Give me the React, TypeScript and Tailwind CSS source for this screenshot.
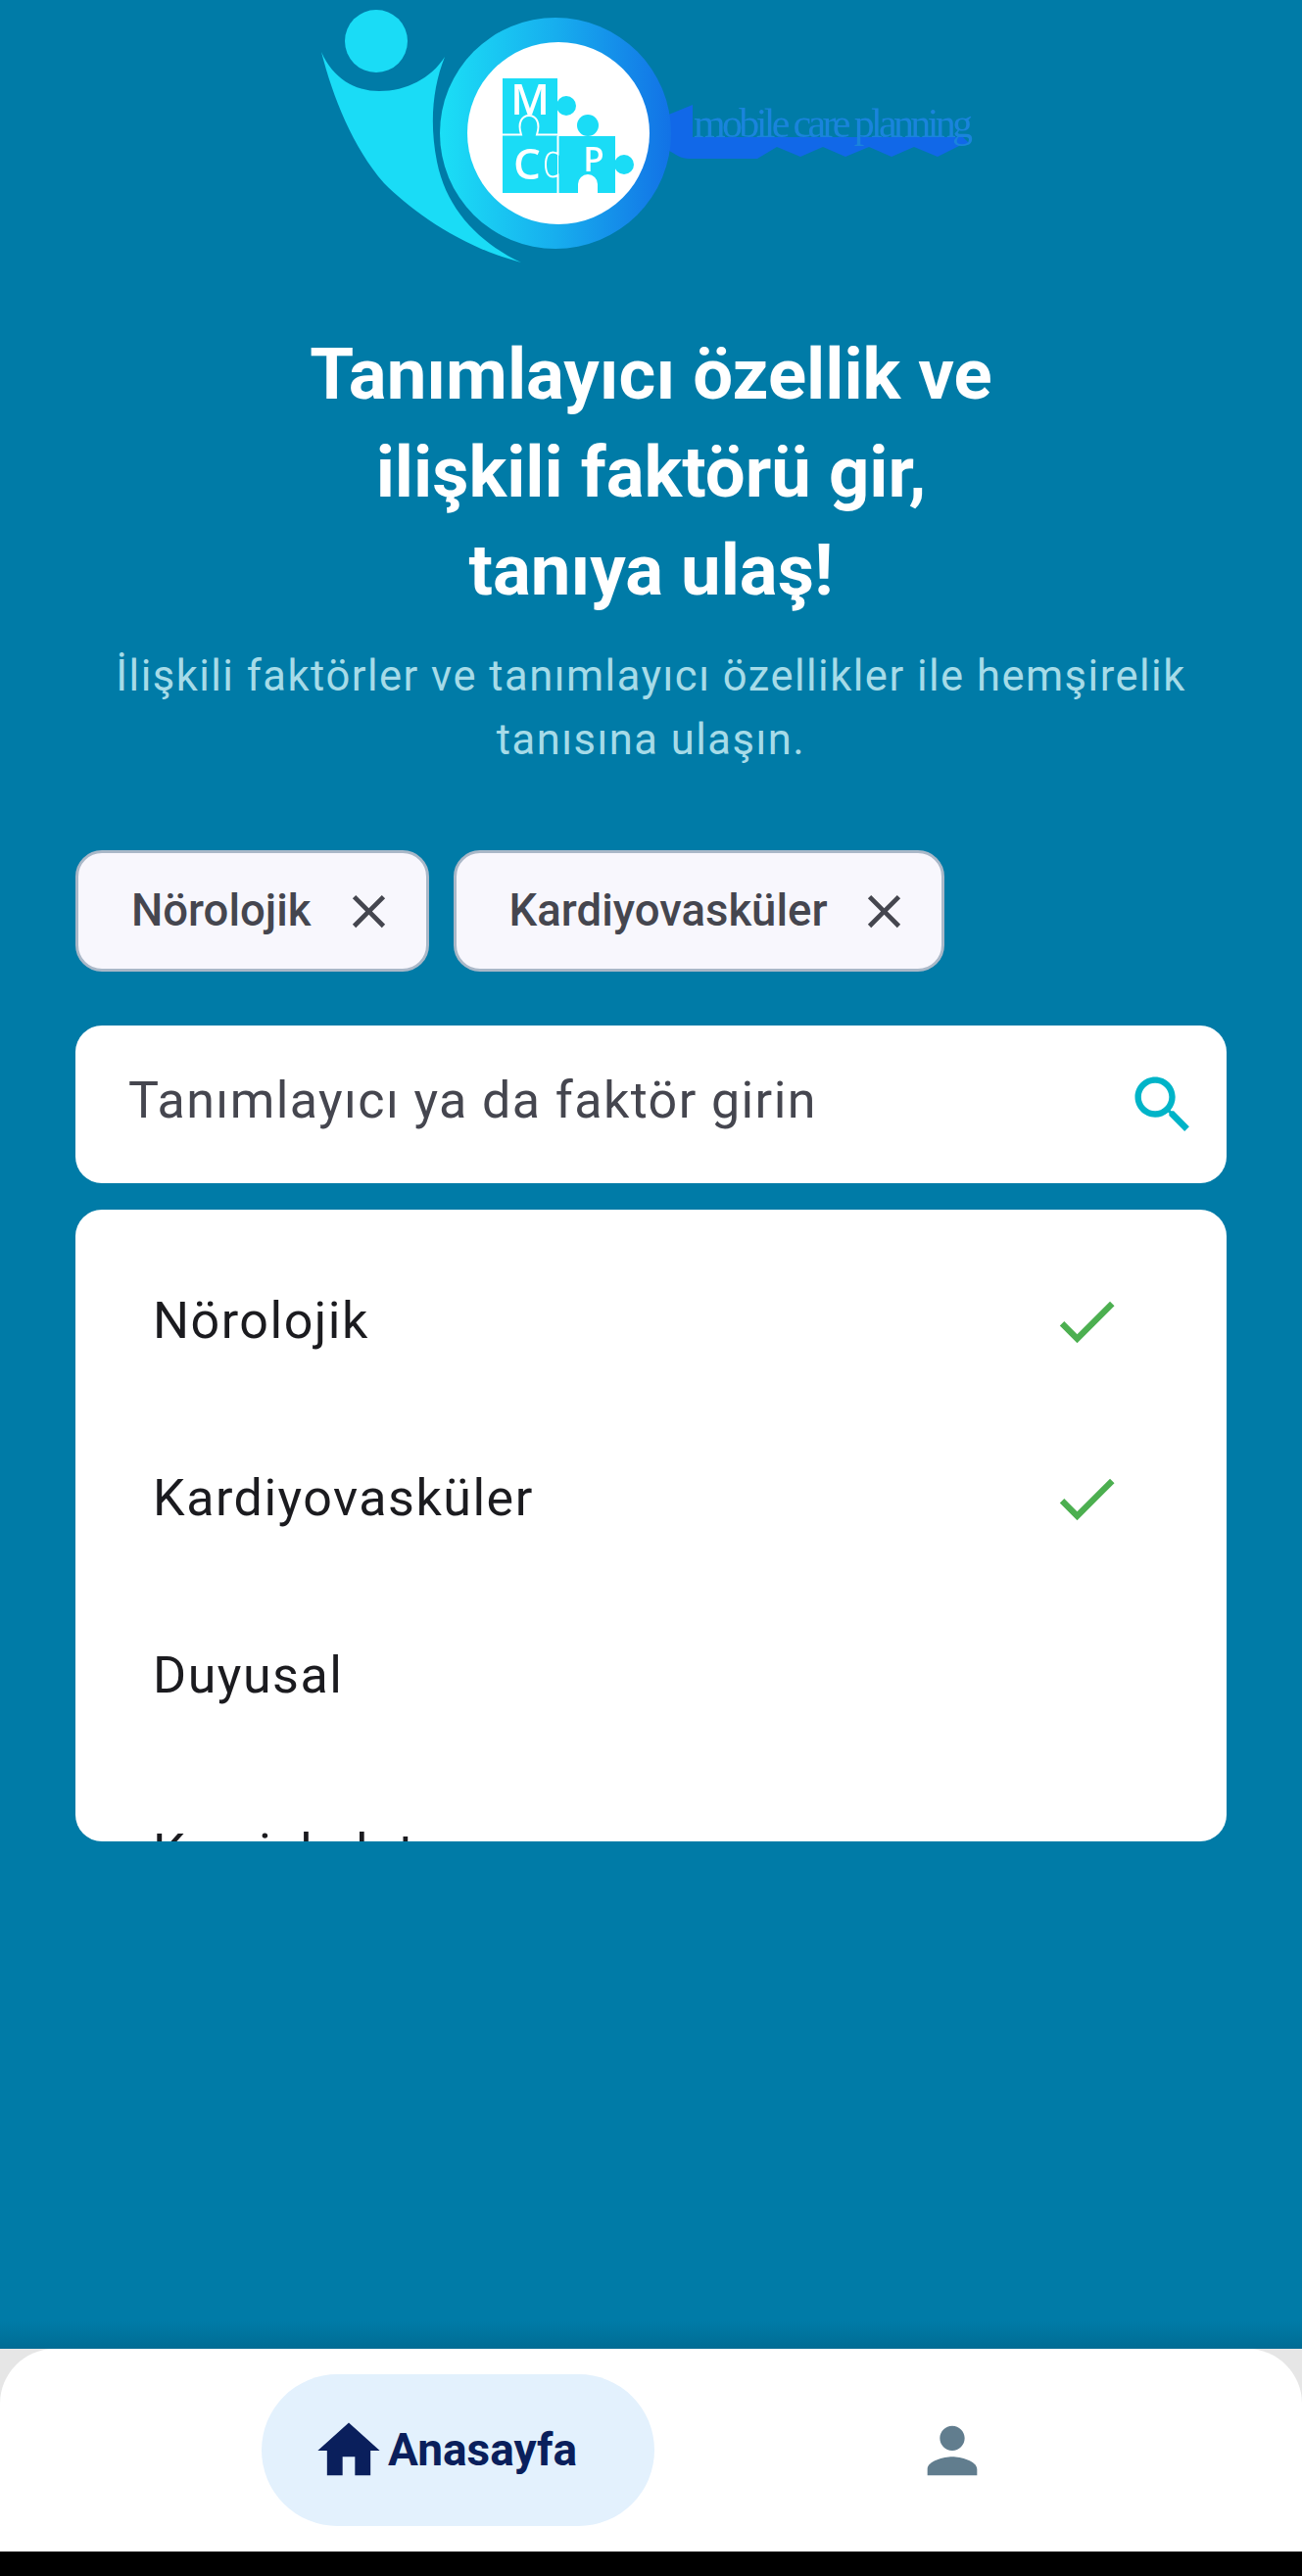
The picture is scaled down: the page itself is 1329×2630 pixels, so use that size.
const chips = ["Nörolojik", "Kardiyovasküler"];
const options = [
  { title: "Nörolojik", checked: true },
  { title: "Kardiyovasküler", checked: true },
  { title: "Duyusal", checked: false },
  { title: "Kas-iskelet", checked: false },
];

function Logo() {
  return (
    <svg className="mx-auto block h-[280px] w-[729px] blur-[0.5px]" viewBox="300 0 729 280">
      <defs>
        <linearGradient id="ring" x1="0" y1="0" x2="1" y2="0">
          <stop offset="0" stopColor="#1bdff6" />
          <stop offset="0.5" stopColor="#17aeee" />
          <stop offset="1" stopColor="#1272e6" />
        </linearGradient>
      </defs>
      <circle cx="384" cy="42" r="32" fill="#1adcf6" />
      <path
        d="M328 53C340 80 362 93 387 93C415 93 440 80 454 58C442 88 438 125 446 165C456 215 490 248 532 268C470 252 420 215 392 187C360 150 340 100 328 53Z"
        fill="#1adcf6"
      />
      {/* key */}
      <path
        d="M680 118L707 107L707 140L983 140L990 147L983 147L957 160L933 150L910 160L887 150L863 160L840 150L817 160L793 150L773 162L703 162C695 162 690 158 680 152Z"
        fill="#1168e8"
      />
      <circle cx="567" cy="136" r="118" fill="url(#ring)" />
      <circle cx="570" cy="136" r="93" fill="#fff" />
      {/* puzzle */}
      <g fill="#1adcf6">
        <rect x="513" y="80" width="56" height="117" />
        <circle cx="578" cy="108" r="10" />
        <rect x="570" y="139" width="58" height="58" />
        <circle cx="600" cy="128" r="11" />
        <circle cx="637" cy="168" r="10" />
      </g>
      <circle cx="600" cy="188" r="10" fill="#fff" />
      <rect x="590" y="188" width="20" height="10" fill="#fff" />
      <g fill="none" stroke="#fff" strokeWidth="2">
        <path d="M513 137.5H532C528 125 533 118 540 118C547 118 552 125 548 137.5H569" />
        <path d="M569.5 139V157C560 152 557 160 557 168C557 176 560 184 569.5 179V197" />
      </g>
      <g fill="#fff" fontFamily="'Open Sans', sans-serif" fontWeight="600" textAnchor="middle">
        <text x="541" y="117" fontSize="43">
          M
        </text>
        <text x="538" y="183" fontSize="44">
          C
        </text>
        <text x="606" y="175" fontSize="35">
          P
        </text>
      </g>
      <text
        x="708"
        y="140"
        textLength="285"
        lengthAdjust="spacing"
        fill="#1a84dc"
        fontSize="42"
        fontFamily="'Liberation Serif', serif"
      >
        mobile care planning
      </text>
    </svg>
  );
}

export default function App() {
  return (
    <div className="flex h-[2630px] w-[1329px] flex-col overflow-hidden bg-black font-['Roboto',sans-serif]">
      <main className="flex h-[2398px] shrink-0 flex-col bg-[linear-gradient(to_bottom,#007ba7_0,#007ba7_2370px,#006c94_2398px)]">
        <Logo />
        <h1 className="mt-[53px] text-center text-[72.5px] leading-[100px] font-bold text-white">
          Tanımlayıcı özellik ve
          <br />
          ilişkili faktörü gir,
          <br />
          tanıya ulaş!
        </h1>
        <p className="mt-[25px] px-[100px] text-center text-[43.5px] leading-[65px] tracking-[1.5px] text-[#a6dbe8]">
          İlişkili faktörler ve tanımlayıcı özellikler ile hemşirelik tanısına ulaşın.
        </p>

        <div className="mt-[80px] flex gap-[25px] px-[77px]">
          {chips.map((chip) => (
            <div
              key={chip}
              className="flex h-[124px] items-center gap-[30px] rounded-[27px] border-[3px] border-[#aab8c8] bg-[#f8f7fd] pr-[30px] pl-[54px]"
            >
              <span className="text-[45.5px] font-medium text-[#45464f]">{chip}</span>
              <svg className="h-[57px] w-[57px] text-[#45464f]" viewBox="0 0 24 24" fill="currentColor">
                <path d="M19 6.41L17.59 5 12 10.59 6.41 5 5 6.41 10.59 12 5 17.59 6.41 19 12 13.41 17.59 19 19 17.59 13.41 12z" />
              </svg>
            </div>
          ))}
        </div>

        <div className="mx-[77px] mt-[55px] flex h-[161px] items-center justify-between rounded-[27px] bg-white pr-[27px] pl-[54px]">
          <span className="pb-[8px] text-[52px] tracking-[1.4px] text-[#45464f]">Tanımlayıcı ya da faktör girin</span>
          <svg className="h-[76px] w-[76px] text-[#00b4c8]" viewBox="0 0 24 24" fill="currentColor">
            <path d="M15.5 14h-.79l-.28-.27C15.41 12.59 16 11.11 16 9.5 16 5.91 13.09 3 9.5 3S3 5.91 3 9.5 5.91 16 9.5 16c1.61 0 3.09-.59 4.23-1.57l.27.28v.79l5 4.99L20.49 19l-4.99-5zm-6 0C7.01 14 5 11.99 5 9.5S7.01 5 9.5 5 14 7.01 14 9.5 11.99 14 9.5 14z" />
          </svg>
        </div>

        <div className="mx-[77px] mt-[27px] h-[645px] overflow-hidden rounded-[27px] bg-white pt-[23px]">
          {options.map((option) => (
            <div key={option.title} className="flex h-[181px] items-center justify-between pr-[105px] pl-[79px]">
              <span className="text-[52px] tracking-[1.5px] text-[#1b1b1f]">{option.title}</span>
              {option.checked && (
                <svg className="h-[76px] w-[76px] text-[#4caf50]" viewBox="0 0 24 24" fill="currentColor">
                  <path d="M9 16.17L4.83 12l-1.42 1.41L9 19 21 7l-1.41-1.41z" />
                </svg>
              )}
            </div>
          ))}
        </div>
      </main>

      <div className="h-[207px] shrink-0 bg-[#e6e6e6]">
        <nav className="flex h-full items-center rounded-t-[56px] bg-white pl-[267px]">
          <div className="flex h-[155px] w-[401px] items-center gap-[2px] rounded-full bg-[#e3f1fd] pl-[51px]">
            <svg className="h-[76px] w-[76px] text-[#0a1f5c]" viewBox="0 0 24 24" fill="currentColor">
              <path d="M10 20v-6h4v6h5v-8h3L12 3 2 12h3v8z" />
            </svg>
            <span className="text-[46px] font-bold text-[#0a1f5c]">Anasayfa</span>
          </div>
          <svg className="ml-[266px] h-[76px] w-[76px] text-[#617d8e]" viewBox="0 0 24 24" fill="currentColor">
            <path d="M12 12c2.21 0 4-1.79 4-4s-1.79-4-4-4-4 1.79-4 4 1.79 4 4 4zm0 2c-2.67 0-8 1.34-8 4v2h16v-2c0-2.66-5.33-4-8-4z" />
          </svg>
        </nav>
      </div>
    </div>
  );
}
